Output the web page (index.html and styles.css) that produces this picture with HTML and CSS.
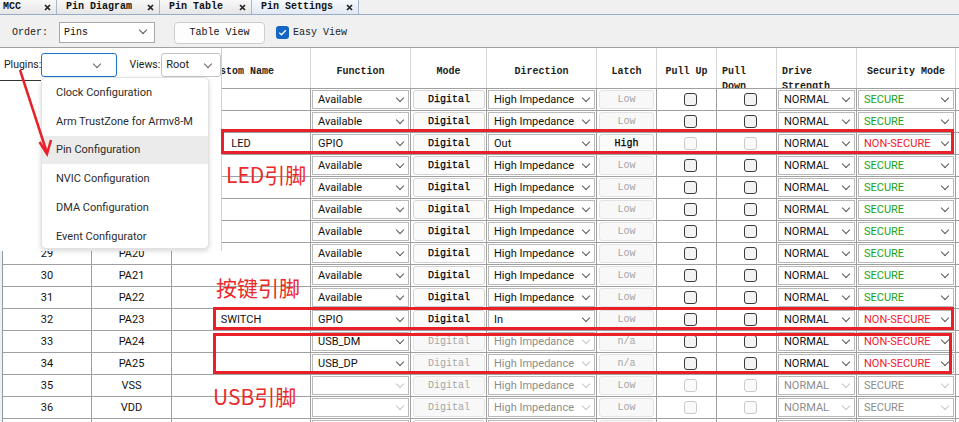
FILE: index.html
```html
<!DOCTYPE html>
<html>
<head>
<meta charset="utf-8">
<link rel="stylesheet" href="styles.css">
</head>
<body>
<div class="tabs">
  <div class="tab t1"><span>MCC</span><svg class="x" width="7" height="7" viewBox="0 0 7 7"><path d="M1 1L6 6M6 1L1 6"/></svg></div>
  <div class="tab t2"><span>Pin Diagram</span><svg class="x" width="7" height="7" viewBox="0 0 7 7"><path d="M1 1L6 6M6 1L1 6"/></svg></div>
  <div class="tab t3"><span>Pin Table</span><svg class="x" width="7" height="7" viewBox="0 0 7 7"><path d="M1 1L6 6M6 1L1 6"/></svg></div>
  <div class="tab t4"><span>Pin Settings</span><svg class="x" width="7" height="7" viewBox="0 0 7 7"><path d="M1 1L6 6M6 1L1 6"/></svg></div>
</div>

<div class="toolbar">
  <span class="lbl">Order:</span>
  <div class="combo">Pins</div>
  <div class="tbtn">Table View</div>
  <span class="chk"><svg width="13" height="13" viewBox="0 0 13 13"><path d="M3.2 6.6L5.5 8.8L9.8 4.3" fill="none" stroke="#fff" stroke-width="1.3"/></svg></span>
  <span class="lbl ev">Easy View</span>
</div>

<div class="table">
  <div class="row head">
    <div class="c"></div>
    <div class="c"></div>
    <div class="c">Custom Name</div>
    <div class="c">Function</div>
    <div class="c">Mode</div>
    <div class="c">Direction</div>
    <div class="c">Latch</div>
    <div class="c">Pull Up</div>
    <div class="c hl">Pull Down</div>
    <div class="c hl">Drive Strength</div>
    <div class="c">Security Mode</div>
  </div>

  <div class="row">
    <div class="c num"></div><div class="c num"></div><div class="c num"></div>
    <div class="c"><div class="sel">Available</div></div>
    <div class="c"><div class="btn">Digital</div></div>
    <div class="c"><div class="sel">High Impedance</div></div>
    <div class="c"><div class="btn lat dis">Low</div></div>
    <div class="c ck"><span class="cb"></span></div>
    <div class="c ck"><span class="cb"></span></div>
    <div class="c"><div class="sel">NORMAL</div></div>
    <div class="c"><div class="sel g">SECURE</div></div>
  </div>
  <div class="row">
    <div class="c num"></div><div class="c num"></div><div class="c num"></div>
    <div class="c"><div class="sel">Available</div></div>
    <div class="c"><div class="btn">Digital</div></div>
    <div class="c"><div class="sel">High Impedance</div></div>
    <div class="c"><div class="btn lat dis">Low</div></div>
    <div class="c ck"><span class="cb"></span></div>
    <div class="c ck"><span class="cb"></span></div>
    <div class="c"><div class="sel">NORMAL</div></div>
    <div class="c"><div class="sel g">SECURE</div></div>
  </div>
  <div class="row">
    <div class="c num"></div><div class="c num"></div><div class="c num">LED</div>
    <div class="c"><div class="sel">GPIO</div></div>
    <div class="c"><div class="btn">Digital</div></div>
    <div class="c"><div class="sel">Out</div></div>
    <div class="c"><div class="btn lat">High</div></div>
    <div class="c ck"><span class="cb dis"></span></div>
    <div class="c ck"><span class="cb dis"></span></div>
    <div class="c"><div class="sel">NORMAL</div></div>
    <div class="c"><div class="sel r">NON-SECURE</div></div>
  </div>
  <div class="row">
    <div class="c num"></div><div class="c num"></div><div class="c num"></div>
    <div class="c"><div class="sel">Available</div></div>
    <div class="c"><div class="btn">Digital</div></div>
    <div class="c"><div class="sel">High Impedance</div></div>
    <div class="c"><div class="btn lat dis">Low</div></div>
    <div class="c ck"><span class="cb"></span></div>
    <div class="c ck"><span class="cb"></span></div>
    <div class="c"><div class="sel">NORMAL</div></div>
    <div class="c"><div class="sel g">SECURE</div></div>
  </div>
  <div class="row">
    <div class="c num"></div><div class="c num"></div><div class="c num"></div>
    <div class="c"><div class="sel">Available</div></div>
    <div class="c"><div class="btn">Digital</div></div>
    <div class="c"><div class="sel">High Impedance</div></div>
    <div class="c"><div class="btn lat dis">Low</div></div>
    <div class="c ck"><span class="cb"></span></div>
    <div class="c ck"><span class="cb"></span></div>
    <div class="c"><div class="sel">NORMAL</div></div>
    <div class="c"><div class="sel g">SECURE</div></div>
  </div>
  <div class="row">
    <div class="c num"></div><div class="c num"></div><div class="c num"></div>
    <div class="c"><div class="sel">Available</div></div>
    <div class="c"><div class="btn">Digital</div></div>
    <div class="c"><div class="sel">High Impedance</div></div>
    <div class="c"><div class="btn lat dis">Low</div></div>
    <div class="c ck"><span class="cb"></span></div>
    <div class="c ck"><span class="cb"></span></div>
    <div class="c"><div class="sel">NORMAL</div></div>
    <div class="c"><div class="sel g">SECURE</div></div>
  </div>
  <div class="row">
    <div class="c num"></div><div class="c num"></div><div class="c num"></div>
    <div class="c"><div class="sel">Available</div></div>
    <div class="c"><div class="btn">Digital</div></div>
    <div class="c"><div class="sel">High Impedance</div></div>
    <div class="c"><div class="btn lat dis">Low</div></div>
    <div class="c ck"><span class="cb"></span></div>
    <div class="c ck"><span class="cb"></span></div>
    <div class="c"><div class="sel">NORMAL</div></div>
    <div class="c"><div class="sel g">SECURE</div></div>
  </div>
  <div class="row">
    <div class="c num">29</div><div class="c num">PA20</div><div class="c num"></div>
    <div class="c"><div class="sel">Available</div></div>
    <div class="c"><div class="btn">Digital</div></div>
    <div class="c"><div class="sel">High Impedance</div></div>
    <div class="c"><div class="btn lat dis">Low</div></div>
    <div class="c ck"><span class="cb"></span></div>
    <div class="c ck"><span class="cb"></span></div>
    <div class="c"><div class="sel">NORMAL</div></div>
    <div class="c"><div class="sel g">SECURE</div></div>
  </div>
  <div class="row">
    <div class="c num">30</div><div class="c num">PA21</div><div class="c num"></div>
    <div class="c"><div class="sel">Available</div></div>
    <div class="c"><div class="btn">Digital</div></div>
    <div class="c"><div class="sel">High Impedance</div></div>
    <div class="c"><div class="btn lat dis">Low</div></div>
    <div class="c ck"><span class="cb"></span></div>
    <div class="c ck"><span class="cb"></span></div>
    <div class="c"><div class="sel">NORMAL</div></div>
    <div class="c"><div class="sel g">SECURE</div></div>
  </div>
  <div class="row">
    <div class="c num">31</div><div class="c num">PA22</div><div class="c num"></div>
    <div class="c"><div class="sel">Available</div></div>
    <div class="c"><div class="btn">Digital</div></div>
    <div class="c"><div class="sel">High Impedance</div></div>
    <div class="c"><div class="btn lat dis">Low</div></div>
    <div class="c ck"><span class="cb"></span></div>
    <div class="c ck"><span class="cb"></span></div>
    <div class="c"><div class="sel">NORMAL</div></div>
    <div class="c"><div class="sel g">SECURE</div></div>
  </div>
  <div class="row">
    <div class="c num">32</div><div class="c num">PA23</div><div class="c num">SWITCH</div>
    <div class="c"><div class="sel">GPIO</div></div>
    <div class="c"><div class="btn">Digital</div></div>
    <div class="c"><div class="sel">In</div></div>
    <div class="c"><div class="btn lat dis">Low</div></div>
    <div class="c ck"><span class="cb"></span></div>
    <div class="c ck"><span class="cb"></span></div>
    <div class="c"><div class="sel">NORMAL</div></div>
    <div class="c"><div class="sel r">NON-SECURE</div></div>
  </div>
  <div class="row">
    <div class="c num">33</div><div class="c num">PA24</div><div class="c num"></div>
    <div class="c"><div class="sel">USB_DM</div></div>
    <div class="c"><div class="btn dis">Digital</div></div>
    <div class="c"><div class="sel dis">High Impedance</div></div>
    <div class="c"><div class="btn lat dis">n/a</div></div>
    <div class="c ck"><span class="cb"></span></div>
    <div class="c ck"><span class="cb"></span></div>
    <div class="c"><div class="sel">NORMAL</div></div>
    <div class="c"><div class="sel r">NON-SECURE</div></div>
  </div>
  <div class="row">
    <div class="c num">34</div><div class="c num">PA25</div><div class="c num"></div>
    <div class="c"><div class="sel">USB_DP</div></div>
    <div class="c"><div class="btn dis">Digital</div></div>
    <div class="c"><div class="sel dis">High Impedance</div></div>
    <div class="c"><div class="btn lat dis">n/a</div></div>
    <div class="c ck"><span class="cb"></span></div>
    <div class="c ck"><span class="cb"></span></div>
    <div class="c"><div class="sel">NORMAL</div></div>
    <div class="c"><div class="sel r">NON-SECURE</div></div>
  </div>
  <div class="row">
    <div class="c num">35</div><div class="c num">VSS</div><div class="c num"></div>
    <div class="c"><div class="sel dis"></div></div>
    <div class="c"><div class="btn dis">Digital</div></div>
    <div class="c"><div class="sel dis">High Impedance</div></div>
    <div class="c"><div class="btn lat dis">Low</div></div>
    <div class="c ck"><span class="cb dis"></span></div>
    <div class="c ck"><span class="cb dis"></span></div>
    <div class="c"><div class="sel dis">NORMAL</div></div>
    <div class="c"><div class="sel dis">SECURE</div></div>
  </div>
  <div class="row">
    <div class="c num">36</div><div class="c num">VDD</div><div class="c num"></div>
    <div class="c"><div class="sel dis"></div></div>
    <div class="c"><div class="btn dis">Digital</div></div>
    <div class="c"><div class="sel dis">High Impedance</div></div>
    <div class="c"><div class="btn lat dis">Low</div></div>
    <div class="c ck"><span class="cb dis"></span></div>
    <div class="c ck"><span class="cb dis"></span></div>
    <div class="c"><div class="sel dis">NORMAL</div></div>
    <div class="c"><div class="sel dis">SECURE</div></div>
  </div>
  <div class="row">
    <div class="c num"></div><div class="c num"></div><div class="c num"></div>
    <div class="c"><div class="sel"></div></div>
    <div class="c"><div class="btn"></div></div>
    <div class="c"><div class="sel"></div></div>
    <div class="c"><div class="btn lat dis"></div></div>
    <div class="c ck"><span class="cb"></span></div>
    <div class="c ck"><span class="cb"></span></div>
    <div class="c"><div class="sel"></div></div>
    <div class="c"><div class="sel"></div></div>
  </div>
</div>

<div class="panel">
  <div class="phead">
    <div class="plabel">Plugins:</div>
    <div class="pcombo"></div>
    <div class="vlabel">Views:</div>
    <div class="vcombo">Root</div>
  </div>
</div>

<div class="popup">
  <div class="item">Clock Configuration</div>
  <div class="item">Arm TrustZone for Armv8-M</div>
  <div class="item hi">Pin Configuration</div>
  <div class="item">NVIC Configuration</div>
  <div class="item">DMA Configuration</div>
  <div class="item">Event Configurator</div>
</div>

<div class="mark m1"></div>
<div class="mark m2"></div>
<div class="mark m3"></div>
<div class="note n1">LED引脚</div>
<div class="note n2">按键引脚</div>
<div class="note n3">USB引脚</div>

<svg class="arrow" width="959" height="422" viewBox="0 0 959 422">
  <line x1="20" y1="70" x2="47" y2="153" stroke="#e8202a" stroke-width="2.5"/>
  <polyline points="39.5,142 47,154 51,140" fill="none" stroke="#e8202a" stroke-width="2.5" stroke-linejoin="miter"/>
</svg>
</body>
</html>
```

FILE: styles.css
```css
body {
  margin: 0;
  width: 959px;
  height: 422px;
  overflow: hidden;
  position: relative;
  background: #f0f0f0;
  font-family: Roboto, "Liberation Sans", sans-serif;
  font-size: 11px;
  color: #111;
}

/* tabs */
.tabs {
  display: flex;
  height: 15px;
  box-sizing: border-box;
  border-bottom: 1px solid #97adc6;
}
.tab {
  box-sizing: border-box;
  height: 14px;
  display: flex;
  align-items: center;
  justify-content: space-between;
  padding: 0 5px 0 9px;
  border-right: 1px solid #a8b8cc;
  background: linear-gradient(#f8f8f8, #e6e6e6);
  font: bold 10px/14px "Liberation Mono", monospace;
  color: #111;
}
.t1 { width: 57px; padding-left: 3px; }
.t2 { width: 103px; }
.t3 { width: 92px; }
.t4 { width: 107px; background: linear-gradient(#f6f9fd, #e2e9f4); }
.x path { stroke: #222; stroke-width: 1.7; }

/* toolbar */
.toolbar {
  height: 33px;
  box-sizing: border-box;
  padding: 3px 0 0 12px;
  display: flex;
  align-items: center;
  border-bottom: 1px solid #a0a0a0;
}
.lbl { font: 10px "Liberation Mono", monospace; color: #222; }
.combo {
  margin-left: 11px;
  width: 96px;
  height: 21px;
  box-sizing: border-box;
  border: 1px solid #a9a9a9;
  background: #fff;
  position: relative;
  padding-left: 4px;
  font: 10px/19px "Liberation Mono", monospace;
}
.combo::after {
  content: "";
  position: absolute;
  right: 8px;
  top: 4px;
  width: 5px;
  height: 5px;
  border-right: 1px solid #555;
  border-bottom: 1px solid #555;
  transform: rotate(45deg);
}
.tbtn {
  margin-left: 19px;
  width: 91px;
  height: 22px;
  box-sizing: border-box;
  border: 1px solid #cdcdcd;
  border-radius: 4px;
  background: #fdfdfd;
  text-align: center;
  font: 10px/20px "Liberation Mono", monospace;
  color: #111;
}
.chk {
  margin-left: 11px;
  width: 13px;
  height: 13px;
  border-radius: 3px;
  background: #1466c2;
  display: flex;
}
.ev { margin-left: 4px; }

/* table */
.table {
  background: #fff;
  margin-left: 2px;
  border-left: 1px solid #8d9bab;
  height: 374px;
  overflow: hidden;
}
.row {
  display: grid;
  grid-template-columns: 89px 80px 139px 100px 76px 110px 60px 60px 60px 80px 99px;
  height: 22px;
  box-sizing: border-box;
  border-bottom: 1px solid #a0a0a0;
}
.c {
  border-right: 1px solid #a0a0a0;
  box-sizing: border-box;
  min-width: 0;
  overflow: hidden;
  display: flex;
  align-items: center;
}
.head { height: 41px; }
.head .c {
  display: block;
  border-right-color: #d8d8d8;
  padding: 16px 5px 0;
  text-align: center;
  font: bold 10px/15px "Liberation Mono", monospace;
  color: #1d1d1d;
}
.head .hl { text-align: left; }

.num { justify-content: center; white-space: nowrap; }

.sel {
  flex: 1;
  align-self: stretch;
  margin: 1px;
  position: relative;
  border: 1px solid #b9b9b9;
  background: #fff;
  padding-left: 5px;
  line-height: 17px;
  white-space: nowrap;
  color: #111;
}
.sel::after {
  content: "";
  position: absolute;
  right: 5px;
  top: 4px;
  width: 5px;
  height: 5px;
  border-right: 1px solid #5a5a5a;
  border-bottom: 1px solid #5a5a5a;
  transform: rotate(45deg);
}
.sel.dis { color: #8c8c8c; }
.sel.dis::after { border-color: #c6c6c6; }
.sel.g { color: #17a317; }
.sel.r { color: #f0202a; }

.btn {
  flex: 1;
  align-self: stretch;
  margin: 1px 1px 1px 2px;
  border: 1px solid #d5d5d5;
  border-radius: 3px;
  background: #fbfbfb;
  text-align: center;
  font: 10px/17px "Liberation Mono", monospace;
  color: #000;
  -webkit-text-stroke: 0.25px #000;
}
.btn.lat { margin: 1px 2px; }
.btn.dis { color: #a6a6a6; background: #f8f8f8; border-color: #e3e3e3; -webkit-text-stroke: 0; }

.ck { justify-content: center; padding-left: 7px; }
.cb {
  width: 13px;
  height: 13px;
  box-sizing: border-box;
  border: 1px solid #3a3a3a;
  border-radius: 3px;
  background: #f3f3f3;
}
.cb.dis { border-color: #cacaca; background: #fafafa; }

/* plugins panel overlay */
.panel {
  position: absolute;
  left: 0;
  top: 48px;
  width: 222px;
  height: 203px;
  box-sizing: border-box;
  background: #fff;
  border-right: 1px solid #d2d2d2;
  overflow: hidden;
}
.phead { display: flex; align-items: center; height: 33px; }
.plabel {
  width: 41px;
  box-sizing: border-box;
  padding-left: 4px;
  align-self: stretch;
  display: flex;
  align-items: center;
  border-bottom: 1px solid #333;
  color: #222;
  font-size: 10.5px;
  white-space: nowrap;
}
.pcombo {
  width: 76px;
  height: 24px;
  box-sizing: border-box;
  border: 1px solid #1a73d0;
  border-radius: 3px;
  position: relative;
}
.pcombo::after, .vcombo::after {
  content: "";
  position: absolute;
  right: 16px;
  top: 7px;
  width: 5px;
  height: 5px;
  border-right: 1px solid #666;
  border-bottom: 1px solid #666;
  transform: rotate(45deg);
}
.vlabel { margin-left: 13px; color: #222; font-size: 10.5px; }
.vcombo {
  margin-left: 1px;
  width: 60px;
  height: 24px;
  box-sizing: border-box;
  border: 1px solid #c4c4c4;
  border-radius: 3px;
  position: relative;
  padding-left: 4px;
  line-height: 22px;
  color: #222;
}
.vcombo::after { right: 9px; }

/* popup menu */
.popup {
  position: absolute;
  left: 41px;
  top: 77px;
  width: 168px;
  height: 172px;
  box-sizing: border-box;
  background: #fff;
  border: 1px solid #e2e2e2;
  border-radius: 5px;
  box-shadow: 0 2px 5px rgba(0, 0, 0, 0.16);
  overflow: hidden;
}
.item {
  height: 28.8px;
  display: flex;
  align-items: center;
  padding-left: 14px;
  color: #2c2c2c;
  white-space: nowrap;
}
.item.hi { background: #ebebeb; }

/* annotations */
.mark {
  position: absolute;
  border: 3px solid #e8202a;
  box-sizing: border-box;
}
.m1 { left: 221px; top: 129px; width: 733px; height: 25px; }
.m2 { left: 213px; top: 307px; width: 741px; height: 23px; }
.m3 { left: 213px; top: 333px; width: 739px; height: 41px; }

.note {
  position: absolute;
  font: 21px/21px "Noto Sans CJK SC", sans-serif;
  color: #ec2a2a;
  white-space: nowrap;
}
.n1 { left: 226px; top: 164px; }
.n2 { left: 216px; top: 277px; }
.n3 { left: 213px; top: 386px; }

.arrow {
  position: absolute;
  left: 0;
  top: 0;
  pointer-events: none;
}
```
